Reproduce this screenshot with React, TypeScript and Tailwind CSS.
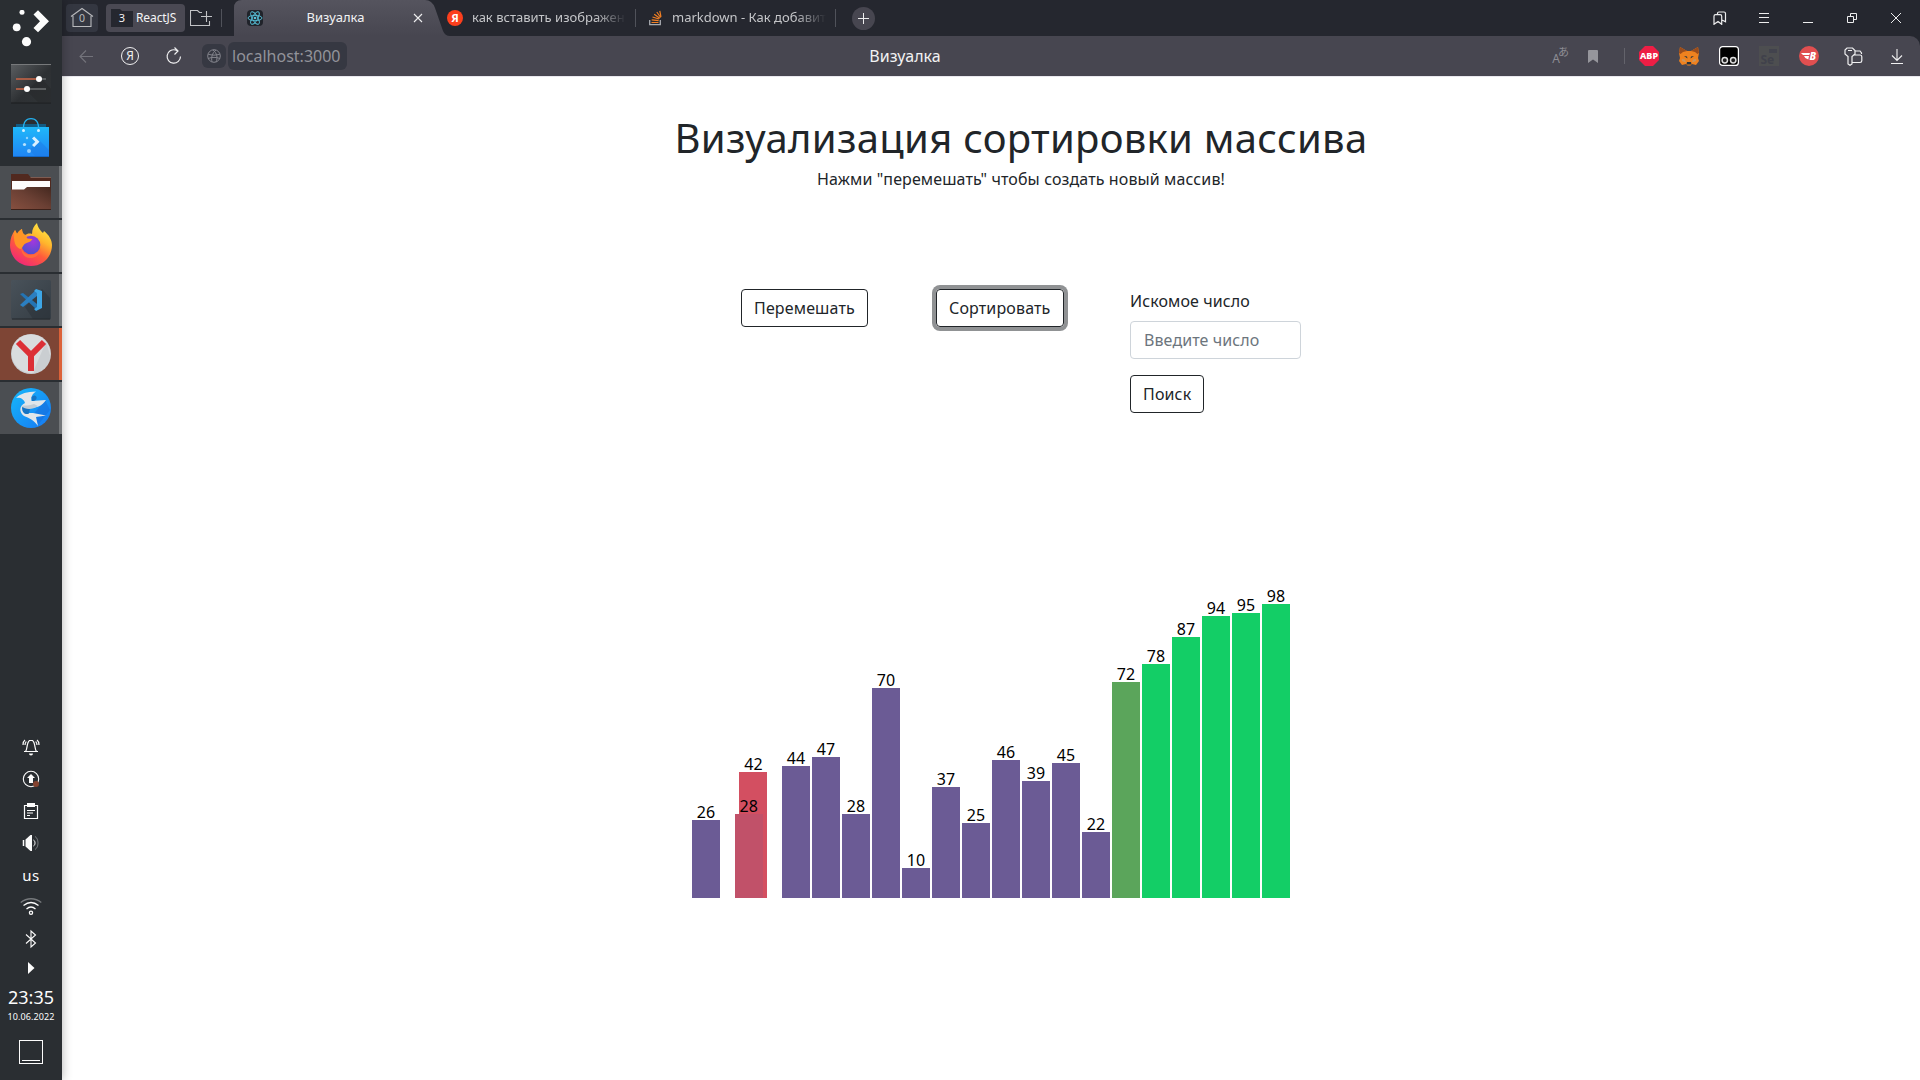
import React from "react";

type Tone = "idle" | "sorted" | "settling";

interface BarItem {
  value: number;
  tone: Tone;
}

const rest: BarItem[] = [
  ...[44, 47, 28, 70, 10, 37, 25, 46, 39, 45, 22].map((value) => ({ value, tone: "idle" as Tone })),
  { value: 72, tone: "settling" },
  ...[78, 87, 94, 95, 98].map((value) => ({ value, tone: "sorted" as Tone })),
];

const toneClass: Record<Tone, string> = {
  idle: "bg-[#6b5b95]",
  settling: "bg-[#5ba55b]",
  sorted: "bg-[#13ce66]",
};

function Bar({ value, color }: { value: number; color: string }) {
  return (
    <div className="flex w-7 flex-col items-center text-base leading-6 text-black">
      <span className="-mb-1">{value}</span>
      <div className={`w-7 ${color}`} style={{ height: value * 3 }} />
    </div>
  );
}

function Chart() {
  return (
    <div className="flex h-[310px] items-end gap-0.5">
      <Bar value={26} color="bg-[#6b5b95]" />
      <div className="relative h-full w-[58px]">
        <div className="absolute bottom-0 left-[17.4px]">
          <Bar value={42} color="bg-[#d34f61]" />
        </div>
        <div className="absolute bottom-0 left-[12.7px]">
          <Bar value={28} color="bg-[#c15169]" />
        </div>
      </div>
      {rest.map((b, i) => (
        <Bar key={i} value={b.value} color={toneClass[b.tone]} />
      ))}
    </div>
  );
}

function Dock({ children, active, open }: { children?: React.ReactNode; active?: boolean; open?: boolean }) {
  const bg = active ? "bg-[#7e4535]" : open ? "bg-[#4b4e52]" : "";
  const edge = active ? "bg-[#dc6239]" : open ? "bg-[#737679]" : "";
  return (
    <div className={`flex h-[52px] w-full shrink-0 items-center ${bg}`}>
      <div className="flex flex-1 justify-center pl-[3px]">{children}</div>
      <div className={`h-full w-[3px] ${edge}`} />
    </div>
  );
}

function LauncherIcon() {
  return (
    <svg width="40" height="40" viewBox="0 0 40 40" fill="#fcfcfc">
      <circle cx="11" cy="2.3" r="2.5" />
      <circle cx="5.7" cy="17.3" r="3.9" />
      <circle cx="15.5" cy="31.7" r="4.6" />
      <path d="M22.500 4.500 27 .200 38 11.200 27 22.200 22.500 18 29 11.200Z" />
    </svg>
  );
}

function SettingsIcon() {
  return (
    <svg width="40" height="40" viewBox="0 0 40 40">
      <defs>
        <linearGradient id="set" x1="0" y1="0" x2="1" y2="1">
          <stop offset="0" stopColor="#5b5e61" />
          <stop offset=".55" stopColor="#2d3033" />
          <stop offset="1" stopColor="#303437" />
        </linearGradient>
      </defs>
      <rect width="40" height="39" fill="url(#set)" />
      <path d="M0 .5h40" stroke="#77797b" />
      <path d="M0 39h40" stroke="#1b1d1f" />
      <path d="M16 27 28 39H40V25L30 14Z" fill="#25282a" opacity=".5" />
      <path d="M5 15h23M5 25h11" stroke="#a85c45" strokeWidth="2" />
      <path d="M28 15h7M16 25h19" stroke="#5b5e60" strokeWidth="2" />
      <circle cx="28" cy="15" r="3" fill="#fff" />
      <circle cx="16" cy="25" r="3" fill="#fff" />
    </svg>
  );
}

function StoreIcon() {
  return (
    <svg width="40" height="40" viewBox="0 0 40 40">
      <defs>
        <linearGradient id="bag" x1="0" y1="0" x2="0" y2="1">
          <stop offset="0" stopColor="#1fb8fa" />
          <stop offset="1" stopColor="#1f84f4" />
        </linearGradient>
      </defs>
      <path d="M5 6h30v5H5Z" fill="#135b83" />
      <path d="M2 9h36v30H2Z" fill="url(#bag)" />
      <path d="M2 38.5h36" stroke="#1468c8" />
      <path d="M18 32 29 23 38 32v6H24Z" fill="#1b78e4" opacity=".45" />
      <path d="M12.500 12C12 4 15 .7 20 .7S28 4 27.500 12" fill="none" stroke="#23b3f2" strokeWidth="1.300" />
      <circle cx="12.500" cy="12.400" r="1.500" fill="#d6f1ff" />
      <circle cx="27.500" cy="12.400" r="1.500" fill="#d6f1ff" />
      <circle cx="16" cy="20" r="1.200" fill="#8fd3fd" />
      <circle cx="13.500" cy="26.500" r="1.600" fill="#b8e2fd" />
      <circle cx="18" cy="33" r="2" fill="#93cdfb" />
      <path d="m21 20.500 2.200-2 5.300 5.300-5.300 5.300-2.200-2 3.300-3.300Z" fill="#d9f0ff" />
    </svg>
  );
}

function FolderIcon() {
  return (
    <svg width="40" height="40" viewBox="0 0 40 40">
      <defs>
        <linearGradient id="fold" x1="0" y1="1" x2="1" y2="0">
          <stop offset="0" stopColor="#875040" />
          <stop offset=".5" stopColor="#6b4034" />
          <stop offset="1" stopColor="#44281f" />
        </linearGradient>
      </defs>
      <path d="M0 2h17l2.500 3H40v13H0Z" fill="#51291f" />
      <path d="M19.500 5.500H40" stroke="#8a6a60" strokeWidth=".8" />
      <path d="M1 9h38v9H1Z" fill="#fcfcfc" />
      <path d="M0 17.500h13l3-2.500h24v22.500H0Z" fill="url(#fold)" />
      <path d="M0 37.500h40" stroke="#3b211a" />
    </svg>
  );
}

function FirefoxIcon() {
  return (
    <svg className="-mt-1" width="42" height="44" viewBox="0 0 42 44">
      <defs>
        <linearGradient id="ff" x1=".85" y1="0" x2=".25" y2="1">
          <stop offset="0" stopColor="#fff14a" />
          <stop offset=".35" stopColor="#ffb52c" />
          <stop offset=".62" stopColor="#ff5b3b" />
          <stop offset="1" stopColor="#f0247c" />
        </linearGradient>
        <radialGradient id="ffc" cx=".6" cy=".3" r=".7">
          <stop offset="0" stopColor="#a337dd" />
          <stop offset="1" stopColor="#4f50d0" />
        </radialGradient>
      </defs>
      <path d="M5 8 7 12C8 10 9 9 12 7c0 3 1 5 3 6 2-1 4-2 7-1 0-5 2-8 5-11 1 5 3 7 6 10l1-2c5 4 8 9 8 14 0 12-9 21-21 21S0 35 0 23C0 17 2 12 5 8Z" fill="url(#ff)" />
      <circle cx="21" cy="23" r="9.300" fill="url(#ffc)" />
      <path d="M5 8 7 12C8 10 9 9 12 7c0 3 1 5 3 6l2.500 3.500 5 .500c-1 2-3 3-6 4-3 1-4 4-5 6C6 27 2 19 5 8Z" fill="#ff9526" />
      <path d="M11.500 25c1 9 13 11 19 2-1 6-5 9-10 9-6 0-10-5-9-11Z" fill="#ff6a3c" />
    </svg>
  );
}

function CodeIcon() {
  return (
    <svg width="40" height="40" viewBox="0 0 40 40">
      <defs>
        <linearGradient id="vs" x1="0" y1="0" x2="1" y2="1">
          <stop offset="0" stopColor="#49525a" />
          <stop offset="1" stopColor="#343c43" />
        </linearGradient>
      </defs>
      <rect width="40" height="39.500" rx="1.500" fill="url(#vs)" />
      <path d="M1 39h38" stroke="#24292d" />
      <path d="m31 9 8 9v21H22l-8-12Z" fill="#282f35" opacity=".45" />
      <path d="m9 14 3-1 14 11v6Z" fill="#2474b3" />
      <path d="m9 25 17-16v7L12 27Z" fill="#2b7fc1" />
      <path d="m25 9 6 2v17l-6 3-2-2 3-2V13l-3-2Z" fill="#3da6e6" />
    </svg>
  );
}

function YandexBrowserIcon() {
  return (
    <svg width="40" height="40" viewBox="0 0 40 40">
      <circle cx="20" cy="20" r="20" fill="#c7ccd0" />
      <circle cx="20" cy="19.700" r="19.300" fill="#d9dcde" />
      <path d="M23 36 35 8l4 13c0 8-7 16-16 18Z" fill="#bfc4c8" opacity=".6" />
      <path d="M7 8 20 21 33 8M20 19v18" fill="none" stroke="#dc2f36" strokeWidth="6" />
    </svg>
  );
}

function BirdIcon() {
  return (
    <svg width="40" height="40" viewBox="0 0 40 40">
      <defs>
        <linearGradient id="bird" x1="0" y1="0" x2="1" y2="1">
          <stop offset="0" stopColor="#16b9fb" />
          <stop offset="1" stopColor="#1677f2" />
        </linearGradient>
      </defs>
      <circle cx="20" cy="20" r="20" fill="url(#bird)" />
      <path d="M22 27 34 12l5 10-12 15Z" fill="#1767d3" opacity=".45" />
      <path d="M5 10C10 5 16 4 25 3.500 21 6 20 9 20.500 13L35 12C31 18 26 20 19 20c-4 0-4 3-1 5l4 0 13 2.500L25 29l2 9c-4-6-9-8-14-10-5-4-5-10 1-13C13 11 9 9 5 10Z" fill="#e1e6ea" />
      <path d="M20.500 9c2-2 4-2 5 0 .5 2-1 4-4.500 4Z" fill="#1574c4" />
      <path d="M11 19.500c2-2.500 6-1 8 1l-1 5c-3 1.500-7 0-7-6Z" fill="#1574c4" />
      <path d="M10 18c5 4 11 4 17 0l-4-2c-5 2-9 1-13 2Z" fill="#c2ccd5" />
    </svg>
  );
}

function Tray() {
  return (
    <div className="flex w-full flex-col items-center text-[#fcfcfc]">
      <svg className="h-8" width="18" height="18" viewBox="0 0 18 18" fill="none" stroke="currentColor" strokeWidth="1.200">
        <path d="M2 13.500h14M3.500 13.500c2-2 1-9 4-11h3c3 2 2 9 4 11M1 7c0-2 .5-4 2-5M17 7c0-2-.5-4-2-5M3 7c0-1 .5-2.500 1.300-3.500M15 7c0-1-.5-2.500-1.300-3.500" />
        <path d="M7 15.500h4a2 2 0 0 1-4 0Z" fill="currentColor" stroke="none" />
      </svg>
      <svg className="h-8" width="18" height="18" viewBox="0 0 18 18" fill="none">
        <circle cx="9" cy="9" r="7.700" stroke="currentColor" strokeWidth="1.100" />
        <path d="m9 4 4 4h-2v5H7V8H5Z" fill="currentColor" />
        <circle cx="14" cy="14" r="3" fill="#84422f" />
      </svg>
      <svg className="h-8" width="16" height="18" viewBox="0 0 16 18" fill="none" stroke="currentColor">
        <path d="M1.500 3.500h13v13h-13Z" strokeWidth="1.200" />
        <path d="M4 1h8v4H4Z" fill="currentColor" stroke="none" />
        <path d="M4 8.500h8M4 11h6M4 13.500h3" />
      </svg>
      <svg className="h-8" width="18" height="18" viewBox="0 0 18 18" fill="none" stroke="currentColor">
        <path d="M3.500 5.500 8.500 1H10v16H8.500L3.500 12.500Z" fill="currentColor" stroke="none" />
        <path d="M1.500 6v6" strokeWidth="1.500" />
        <path d="M11.500 6c2 1 2 5 0 6" />
        <path d="M13 2.500c4 2 4 11 0 13" stroke="#777a7d" />
      </svg>
      <span className="h-8 text-[15px] leading-[32px] tracking-[0.4px]">us</span>
      <svg className="h-8" width="22" height="18" viewBox="0 0 22 18" fill="none" stroke="currentColor" strokeWidth="1.300">
        <circle cx="11" cy="14.800" r="1.600" />
        <path d="M6.500 11c3-2.700 6-2.700 9 0M3.500 7.500c5-4 10-4 15 0" />
        <path d="M.7 4.500c6-5 14.600-5 20.600 0" stroke="#777a7d" />
      </svg>
      <svg className="h-8" width="12" height="18" viewBox="0 0 12 18" fill="none" stroke="currentColor" strokeWidth="1.100">
        <path d="m1 4.500 9.500 8.500L6 17V1l4.500 4L1 13.500" />
      </svg>
      <svg className="h-[26px]" width="8" height="12" viewBox="0 0 8 12" fill="currentColor">
        <path d="m1 0 6.500 6L1 12Z" />
      </svg>
      <span className="mt-[3px] text-[18px] leading-[26px]">23:35</span>
      <span className="mt-px text-[9px] leading-3 tracking-[0.1px]">10.06.2022</span>
      <div className="mt-[17px] flex h-6 w-6 items-end justify-center border border-[#fcfcfc] pb-0.5">
        <div className="h-px w-[18px] bg-[#fcfcfc]" />
      </div>
    </div>
  );
}

function Sidebar() {
  return (
    <aside className="z-10 flex h-full w-[62px] shrink-0 flex-col justify-between bg-[#2a2e32] pb-4 pt-1 shadow-[0_0_10px_rgba(0,0,0,0.3)]">
      <div className="flex flex-col gap-0.5">
        <Dock><LauncherIcon /></Dock>
        <Dock><SettingsIcon /></Dock>
        <Dock><StoreIcon /></Dock>
        <Dock open><FolderIcon /></Dock>
        <Dock open><FirefoxIcon /></Dock>
        <Dock open><CodeIcon /></Dock>
        <Dock active open><YandexBrowserIcon /></Dock>
        <Dock open><BirdIcon /></Dock>
      </div>
      <Tray />
    </aside>
  );
}

function TabStrip() {
  return (
    <div className="flex h-9 items-center bg-[#25272f] text-[13px] text-[#c5c6c9]">
      <div className="ml-1 flex h-7 w-8 items-center justify-center rounded bg-[#343741]">
        <svg width="24" height="22" viewBox="0 0 24 22" fill="none" stroke="#b9babd" strokeWidth="1.100">
          <path d="M1 9.500 12 1.500l11 8M3 9v10.500h18V9" />
          <text x="12" y="15" textAnchor="middle" fontSize="10.500" fill="#b9babd" stroke="none">0</text>
        </svg>
      </div>
      <div className="ml-2 flex h-7 w-[79px] items-center rounded bg-[#4a4953] pl-[5px] text-[12px] text-[#f4f4f5]">
        <div className="relative flex h-[18px] w-[22px] items-center justify-center">
          <svg className="absolute inset-0" width="22" height="18" viewBox="0 0 22 18">
            <path d="M0 0h9l2 2h11v16H0Z" fill="#25272f" />
          </svg>
          <span className="relative text-[11px]">3</span>
        </div>
        <span className="ml-[3px] tracking-[-0.1px]">ReactJS</span>
      </div>
      <svg className="ml-[5px]" width="22" height="18" viewBox="0 0 22 18" fill="none" stroke="#c2c3c6" strokeWidth="1.100">
        <path d="M12 3.500H9.500L7.500 1.500H.5v15h19V12M16.500 2v11M11 7.500h11" />
      </svg>
      <div className="ml-[9px] h-[18px] w-px bg-[#50525a]" />
      <div className="relative ml-3 h-9 w-[200px]">
        <svg className="absolute left-0 top-0" width="216" height="36" viewBox="0 0 216 36">
          <defs>
            <linearGradient id="tab" x1="0" y1="0" x2="0" y2="1">
              <stop offset="0" stopColor="#55545e" />
              <stop offset="1" stopColor="#474650" />
            </linearGradient>
          </defs>
          <path d="M0 36V8q0-8 8-8H191q7 0 10 8L209 31q2 5 7 5Z" fill="url(#tab)" />
        </svg>
        <div className="relative flex h-full items-center text-[#f2f2f3]">
          <svg className="ml-[13px] rounded-sm bg-[#20232a]" width="16" height="16" viewBox="0 0 16 16" fill="none" stroke="#58c4dc" strokeWidth=".9">
            <ellipse cx="8" cy="8" rx="7" ry="2.700" />
            <ellipse cx="8" cy="8" rx="7" ry="2.700" transform="rotate(60 8 8)" />
            <ellipse cx="8" cy="8" rx="7" ry="2.700" transform="rotate(120 8 8)" />
            <circle cx="8" cy="8" r="1.300" fill="#58c4dc" stroke="none" />
          </svg>
          <span className="w-[145px] text-center">Визуалка</span>
          <svg className="ml-[5px]" width="10" height="10" viewBox="0 0 10 10" stroke="#eeeeef" strokeWidth="1.100">
            <path d="m1 1 8 8M9 1 1 9" />
          </svg>
        </div>
      </div>
      <div className="ml-[13px] flex h-4 w-4 items-center justify-center rounded-full bg-[#fc3f1d] text-[11px] font-bold leading-4 text-white">Я</div>
      <span className="ml-[9px] w-[154px] overflow-hidden whitespace-nowrap [mask-image:linear-gradient(to_right,#000_80%,transparent)]">как вставить изображение</span>
      <div className="ml-[9px] h-[18px] w-px bg-[#50525a]" />
      <svg className="ml-[13px]" width="13" height="16" viewBox="0 0 13 16" fill="none">
        <path d="M.7 10v4.700h10.600V10" stroke="#a8abb0" strokeWidth="1.300" />
        <path d="M2.500 12.500h7M2.700 9.800l6.900.8M3.500 7l6.500 2M5.200 4.300l5.600 3.900M7.800 2l3.900 5.500M10.800.8l1.200 6" stroke="#f48024" strokeWidth="1.200" />
      </svg>
      <span className="ml-[10px] w-[154px] overflow-hidden whitespace-nowrap [mask-image:linear-gradient(to_right,#000_80%,transparent)]">markdown - Как добавить</span>
      <div className="ml-[9px] h-[18px] w-px bg-[#50525a]" />
      <div className="ml-4 flex h-[23px] w-[23px] items-center justify-center rounded-full bg-[#474650]">
        <svg width="11" height="11" viewBox="0 0 11 11" stroke="#ededee"><path d="M5.500 0v11M0 5.500h11" /></svg>
      </div>
      <div className="ml-auto mr-[2px] flex items-center text-[#ededee]">
        <svg className="mx-[15px]" width="14" height="14" viewBox="0 0 14 14" fill="none" stroke="currentColor" strokeWidth="1.200">
          <path d="M1 13.300V5.200q0-1.500 1.500-1.500h4.700q1.500 0 1.500 1.500v8.100L5 10.500ZM4.500 3.500V2.300Q4.500 1 6 1h5q1.500 0 1.500 1.500v8.300L9 9" />
        </svg>
        <svg className="mx-[15px]" width="14" height="14" viewBox="0 0 14 14" stroke="currentColor">
          <path d="M2 2.500h10M2 6.500h10M2 11.500h10" />
        </svg>
        <svg className="mx-[15px]" width="14" height="14" viewBox="0 0 14 14" stroke="currentColor"><path d="M2 11.500h10" /></svg>
        <svg className="mx-[15px]" width="14" height="14" viewBox="0 0 14 14" fill="none" stroke="currentColor">
          <path d="M2.500 5.500h6v6h-6ZM5.500 5V2.500h6v6H9" />
        </svg>
        <svg className="mx-[15px]" width="14" height="14" viewBox="0 0 14 14" stroke="currentColor"><path d="m2 2 10 10M12 2 2 12" /></svg>
      </div>
    </div>
  );
}

function Toolbar() {
  return (
    <div className="flex bg-[#25272f]">
      <div className="grid h-10 flex-1 grid-cols-[807px_72px_1fr] items-center rounded-tr-[10px] bg-[#474650]">
        <div className="flex items-center text-[#f0f0f1]">
          <svg className="ml-[17px]" width="14" height="14" viewBox="0 0 14 14" fill="none" stroke="#73737b" strokeWidth="1.100">
            <path d="M14 7.500H1M7 1.500l-6 6 6 6" />
          </svg>
          <div className="ml-7 flex h-[18px] w-[18px] items-center justify-center rounded-full border border-[#f0f0f1] text-[12px] leading-none">Я</div>
          <svg className="ml-[27px]" width="16" height="18" viewBox="0 0 16 18" fill="none" stroke="currentColor" strokeWidth="1.200">
            <path d="M14.500 9.500a6.700 6.700 0 1 1-5-6.500L12 4M8.500.5 12 4 8.500 7.500" />
          </svg>
          <div className="ml-5 flex h-6 w-6 items-center justify-center rounded-md bg-[#363842]">
            <svg width="14" height="14" viewBox="0 0 14 14" fill="none" stroke="#84858d">
              <circle cx="7" cy="7" r="6.300" />
              <path d="M1 5c4 1.500 8 1.500 12 0M1 9.500c4-1.500 8-1.500 12 0M9 1C5 4 4 9 5 13M6 1c4 3 5 8 3 12" />
            </svg>
          </div>
          <div className="ml-0.5 flex h-7 w-[119px] items-center rounded-md bg-[#363842] pl-1 text-base leading-7 text-[#92939a]">localhost:3000</div>
        </div>
        <div className="text-center text-base leading-6 text-[#f2f2f3]">Визуалка</div>
        <div className="flex items-center justify-end pr-[17px]">
          <div className="flex h-5 items-start leading-none text-[#8d8d94]">
            <span className="pt-[7px] text-[12px]">A</span>
            <span className="-ml-0.5 [font-family:'Noto_Sans_CJK_JP',sans-serif] text-[11px]">あ</span>
          </div>
          <svg className="ml-[19px]" width="10" height="13" viewBox="0 0 10 13" fill="#96969c"><path d="M1 0h8q1 0 1 1v12L5 9.500 0 13V1q0-1 1-1Z" /></svg>
          <div className="ml-[26px] h-4 w-px bg-[#63636b]" />
          <svg className="ml-[14px]" width="20" height="20" viewBox="0 0 20 20">
            <path d="M6 0h8l6 6v8l-6 6H6l-6-6V6Z" fill="#ed1e45" />
            <text x="10" y="13.300" textAnchor="middle" fontSize="9" fontWeight="800" fill="#fff">ABP</text>
          </svg>
          <svg className="ml-5" width="20" height="20" viewBox="0 0 20 20">
            <path d="m1 1 7 4h4l7-4 1 6-1 5 1 3-3 4-4-1-1.500 1.500h-3L7 18l-4 1-3-4 1-3L0 7Z" fill="#ef821f" />
            <path d="m1 1 7 4-4 1-2.500 2L0 7ZM19 1l-7 4 4 1 2.500 2L20 7Z" fill="#9a4c1c" />
            <path d="m3 13 3 .5 1 3-4-1.500ZM17 13l-3 .5-1 3 4-1.500Z" fill="#c9955f" />
            <path d="m5 10 3 .5.500 2ZM15 10l-3 .5-.5 2ZM8 16l4 0 .5 2.500h-5Z" fill="#26343f" />
          </svg>
          <svg className="ml-5" width="20" height="20" viewBox="0 0 20 20">
            <rect x=".6" y=".6" width="18.800" height="18.800" rx="3" fill="#000" stroke="#fff" strokeWidth="1.200" />
            <circle cx="5.800" cy="14.200" r="2.700" fill="#222" stroke="#ddd" strokeWidth="1.500" />
            <circle cx="14.200" cy="14.200" r="2.700" fill="#222" stroke="#ddd" strokeWidth="1.500" />
          </svg>
          <svg className="ml-5" width="20" height="20" viewBox="0 0 20 20">
            <rect width="20" height="20" fill="#4d4e50" />
            <path d="M10 3h8v4h-8Z" fill="#42434d" />
            <text x="1.500" y="18" fontSize="12" fontWeight="700" fill="#40414b">Se</text>
          </svg>
          <svg className="ml-5" width="20" height="20" viewBox="0 0 20 20">
            <circle cx="10" cy="10" r="10" fill="#e04f50" />
            <path d="M2 7h9l-.7 2H4ZM5 10h5l-.7 3.500Q6 13 5 10Z" fill="#fff" />
            <text x="10.500" y="13.800" fontSize="10.500" fontWeight="800" fontStyle="italic" fill="#fff">B</text>
          </svg>
          <svg className="ml-[25px]" width="19" height="19" viewBox="0 0 19 19" fill="none" stroke="#f0f0f1" strokeWidth="1.200">
            <path d="M3 1h5.500L11 3.500V7L8 9.500V17l-2 1.300L4 17V9.500L1 7V3ZM4 3.500h4M11 4h5l1.500 2v1M9 8h7q1.800 0 1.800 1.800v4q0 1.700-1.800 1.700H8" />
          </svg>
          <svg className="ml-[28px] mt-0.5" width="12" height="16" viewBox="0 0 12 16" fill="none" stroke="#f0f0f1" strokeWidth="1.100">
            <path d="M6 0v11.500M1 6.500l5 5 5-5M0 14.500h12" />
          </svg>
        </div>
      </div>
    </div>
  );
}

const button =
  "h-[38px] rounded border border-[#212529] px-3 text-base leading-6 tracking-[0.15px] text-[#212529] whitespace-nowrap";

function Page() {
  return (
    <main className="flex-1 border-t border-[#e9e8ee] bg-white text-[#212529]">
      <header className="ml-[60px] flex flex-col items-center pt-[37px]">
        <h1 className="text-[40px] leading-[48px] tracking-[0.28px]">Визуализация сортировки массива</h1>
        <p className="mt-[5px] text-base leading-6 tracking-[0.11px]">Нажми "перемешать" чтобы создать новый массив!</p>
      </header>
      <section className="ml-[679px] mt-[98px] grid grid-cols-[194px_195px_171px] items-start">
        <div className="flex">
          <button className={button}>Перемешать</button>
        </div>
        <div className="flex pl-px">
          <button className={`${button} ring-4 ring-[#909294]`}>Сортировать</button>
        </div>
        <div className="flex flex-col items-start">
          <label className="text-base leading-6 tracking-[0.1px]">Искомое число</label>
          <input
            className="mt-2 h-[38px] w-[171px] rounded border border-[#ced4da] pl-[13px] pr-3 text-base tracking-[0.1px] placeholder:text-[#6c757d]"
            placeholder="Введите число"
          />
          <button className={`${button} mt-4`}>Поиск</button>
        </div>
      </section>
      <section className="ml-[630px] mt-[175px]">
        <Chart />
      </section>
    </main>
  );
}

export default function App() {
  return (
    <div className="flex h-[1080px] w-[1920px] overflow-hidden bg-white [font-family:'Noto_Sans',sans-serif]">
      <Sidebar />
      <div className="flex min-w-0 flex-1 flex-col">
        <TabStrip />
        <Toolbar />
        <Page />
      </div>
    </div>
  );
}
